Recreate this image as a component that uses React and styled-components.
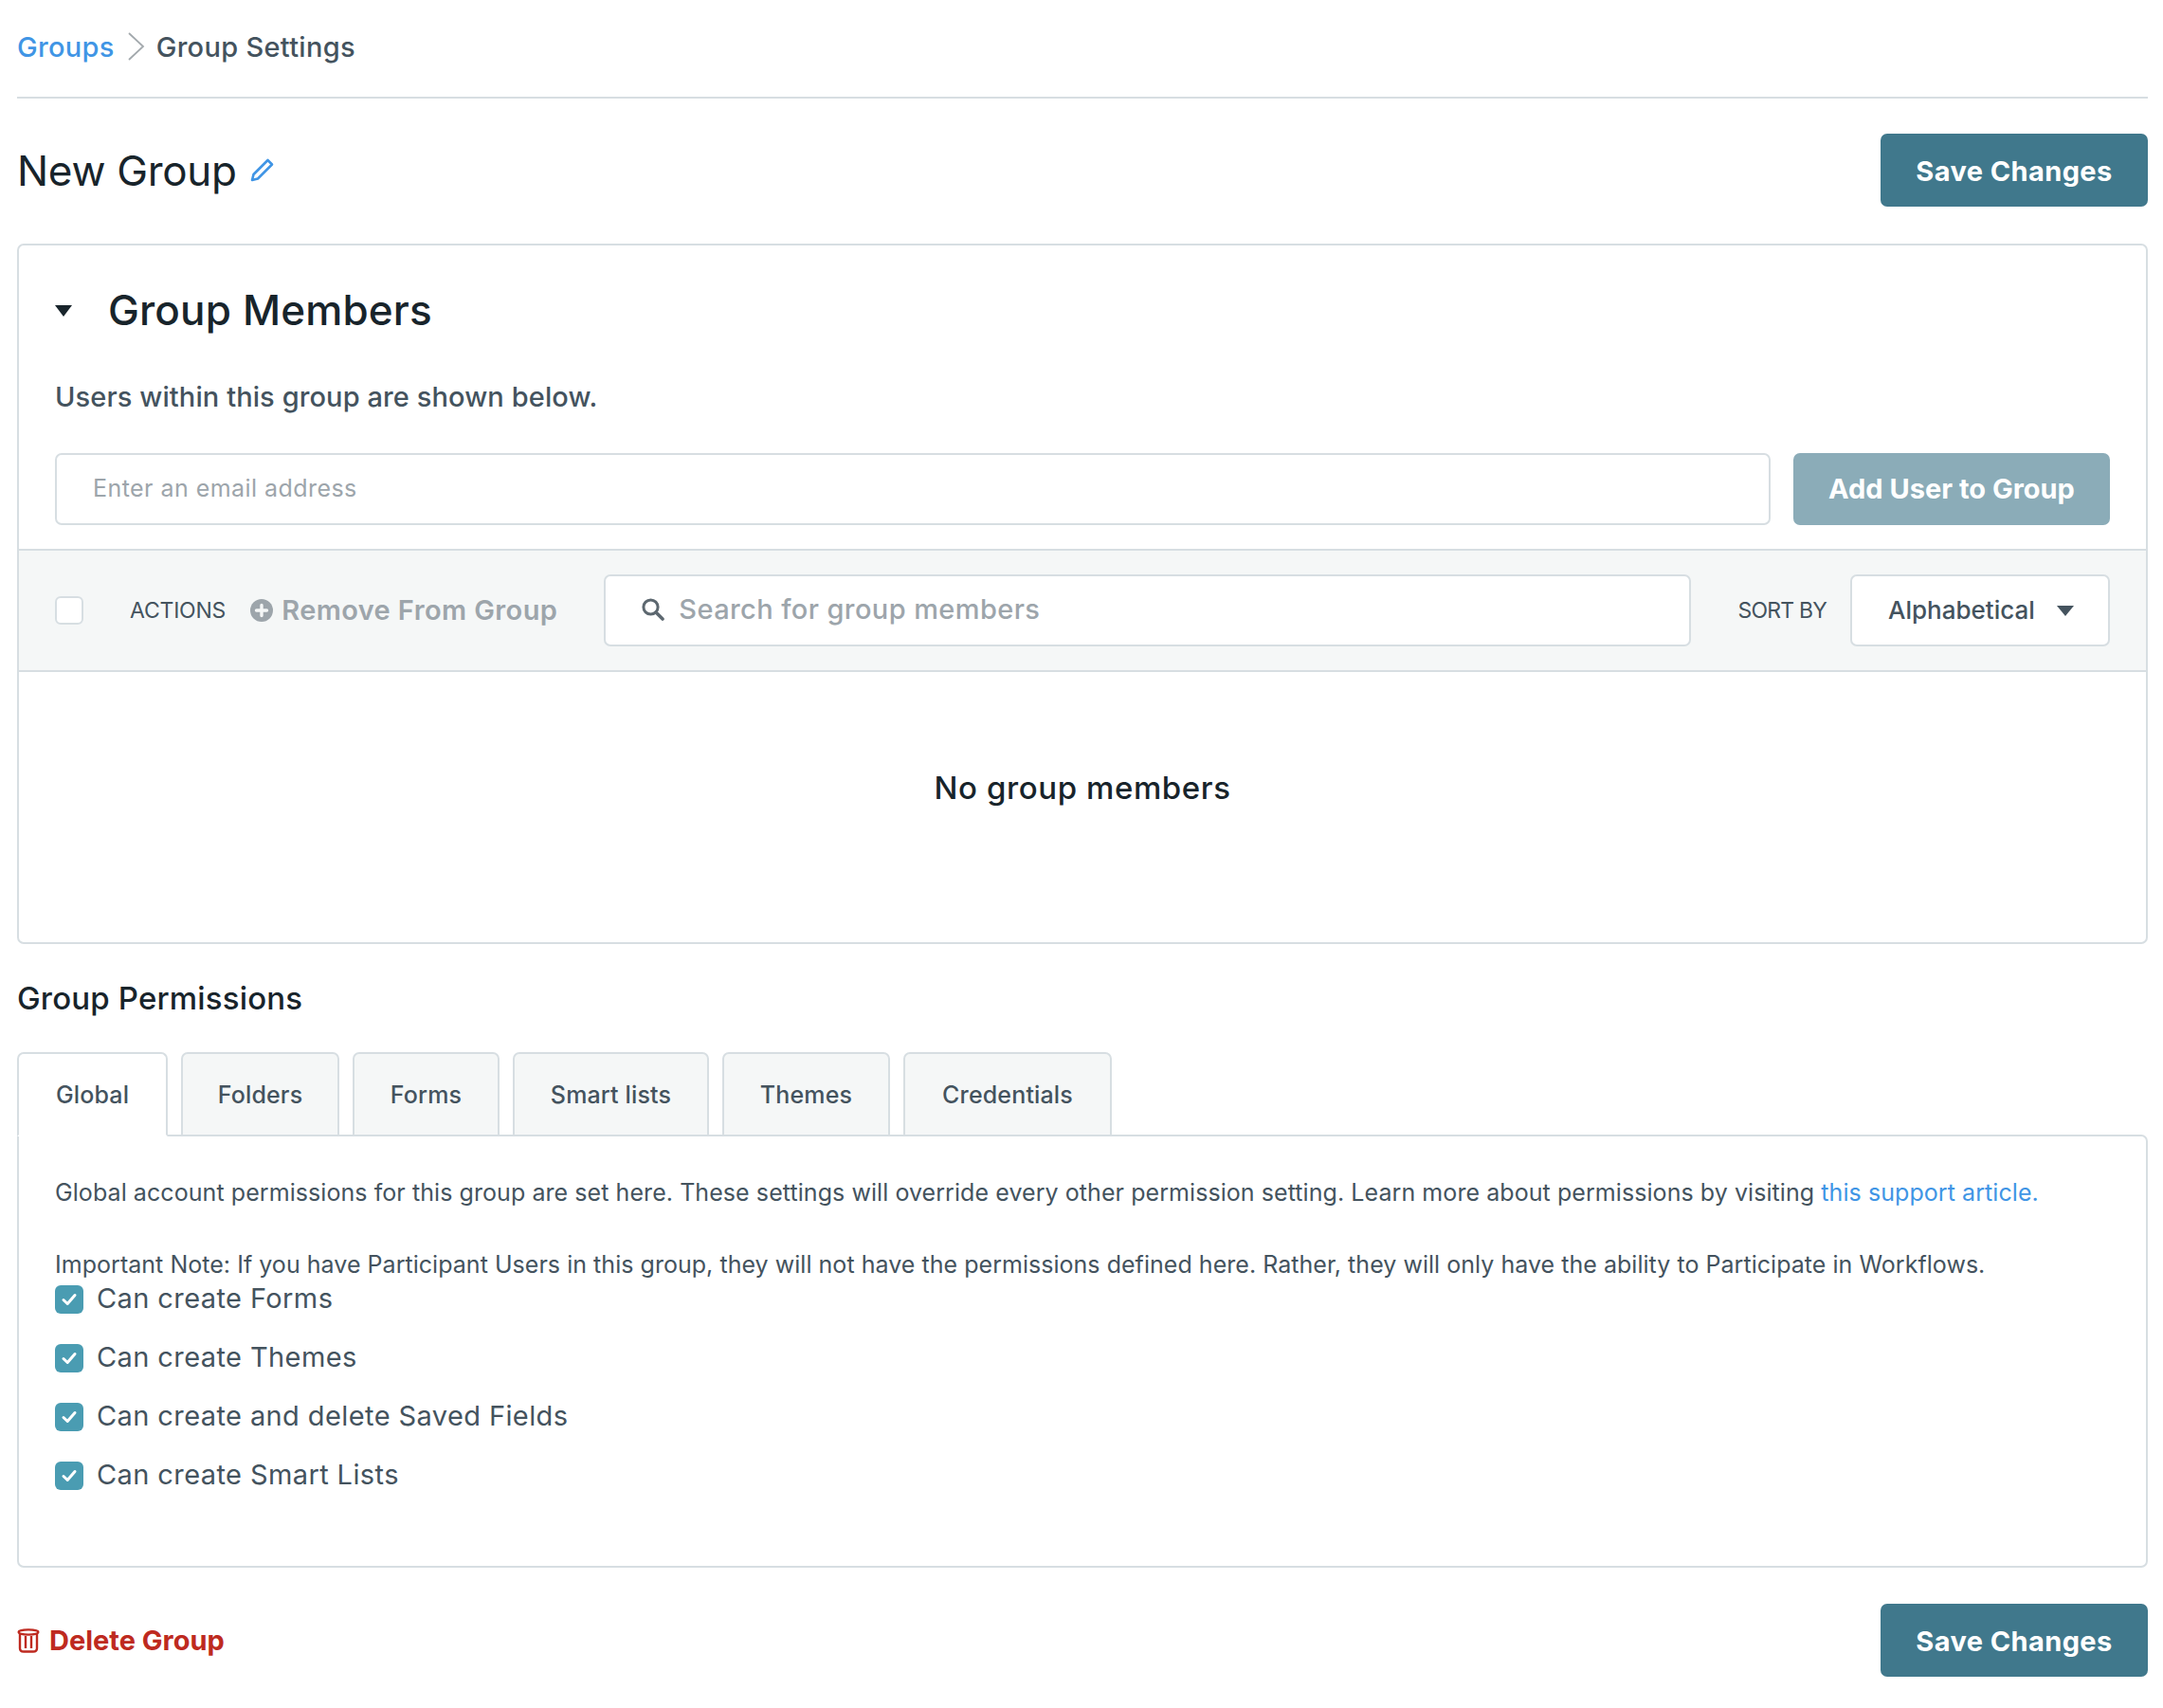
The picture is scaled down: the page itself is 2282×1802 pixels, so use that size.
import React from 'react';
import styled, { createGlobalStyle } from 'styled-components';

const GlobalStyle = createGlobalStyle`
  html, body {
    margin: 0;
    padding: 0;
    background: #fff;
    font-family: Inter, "Liberation Sans", sans-serif;
    color: #44535e;
  }
  * { box-sizing: border-box; }
`;

const Page = styled.div`
  width: 2282px;
  height: 1802px;
  padding: 0 16px 0 18px;
`;

const Breadcrumbs = styled.nav`
  height: 104px;
  padding-bottom: 4px;
  display: flex;
  align-items: center;
  border-bottom: 2px solid #d7dee2;
  font-size: 29px;
  font-weight: 500;
  letter-spacing: 0.3px;
`;

const Crumb = styled.a`
  color: #4095e5;
`;

const CrumbCurrent = styled.span`
  color: #44535e;
`;

const CrumbArrow = styled.svg`
  width: 20px;
  height: 32px;
  margin: 0 11px 0 13px;
`;

const TitleRow = styled.div`
  height: 153px;
  display: flex;
  align-items: center;
  justify-content: space-between;
  padding-bottom: 2px;
`;

const TitleWrap = styled.div`
  display: flex;
  align-items: center;
  gap: 14px;
`;

const Title = styled.h1`
  margin: 0;
  font-size: 44px;
  font-weight: 400;
  color: #18242b;
  letter-spacing: -0.3px;
`;

const SaveButton = styled.button`
  width: 282px;
  height: 77px;
  padding: 2px 0 0;
  border: none;
  border-radius: 7px;
  background: #40788c;
  color: #fff;
  font-family: inherit;
  font-size: 29px;
  font-weight: 700;
  letter-spacing: 0.4px;
`;

const Card = styled.section`
  height: 739px;
  border: 2px solid #d7dee2;
  border-radius: 7px;
  display: flex;
  flex-direction: column;
`;

const CardHead = styled.div`
  padding: 0 38px;
  height: 320px;
`;

const Heading = styled.div`
  height: 98px;
  display: flex;
  align-items: center;
  gap: 38px;
  margin-top: 19px;
`;

const HeadingText = styled.h2`
  margin: 0;
  font-size: 44px;
  font-weight: 500;
  color: #18242b;
  letter-spacing: 0.15px;
`;

const Caret = styled.span`
  display: block;
  width: 0;
  height: 0;
  flex: none;
  margin-top: ${p => p.$offset || 0}px;
  border-left: 9px solid transparent;
  border-right: 9px solid transparent;
  border-top: ${p => p.$height}px solid ${p => p.$color};
`;

const Lead = styled.p`
  margin: 21px 0 0;
  font-size: 29px;
  font-weight: 500;
  line-height: 44px;
  letter-spacing: 0.1px;
  color: #44535e;
`;

const AddRow = styled.div`
  display: flex;
  gap: 24px;
  margin-top: 37px;
`;

const Field = styled.div`
  height: 76px;
  background: #fff;
  border: 2px solid #d7dee2;
  border-radius: 7px;
  display: flex;
  align-items: center;
  padding: 0 38px;
`;

const EmailField = styled(Field)`
  flex: 1;
  padding-bottom: 2px;
  font-size: 25px;
  letter-spacing: 0.45px;
  color: #9da5ab;
`;

const SearchField = styled(Field)`
  flex: 1;
  gap: 15px;
  padding-bottom: 3px;
  font-size: 29px;
  font-weight: 500;
  letter-spacing: 0.4px;
  color: #9da5ab;
`;

const SelectField = styled(Field)`
  width: 274px;
  padding-right: 36px;
`;

const AddButton = styled.button`
  width: 334px;
  height: 76px;
  padding: 0 0 2px;
  border: none;
  border-radius: 7px;
  background: #8bacb8;
  color: #fff;
  font-family: inherit;
  font-size: 29px;
  font-weight: 700;
`;

const Toolbar = styled.div`
  height: 130px;
  background: #f5f7f7;
  border-top: 2px solid #d7dee2;
  border-bottom: 2px solid #d7dee2;
  display: flex;
  align-items: center;
  padding: 0 38px;
`;

const Check = styled.span`
  width: 30px;
  height: 30px;
  flex: none;
  border-radius: 6px;
  display: flex;
  align-items: center;
  justify-content: center;
  background: ${p => (p.$on ? '#4a9cb2' : '#fff')};
  border: ${p => (p.$on ? 'none' : '2px solid #d7dee2')};
`;

const ActionsLabel = styled.span`
  margin-left: 49px;
  font-size: 23px;
  letter-spacing: -0.2px;
  color: #44535e;
`;

const RemoveAction = styled.span`
  display: flex;
  align-items: center;
  gap: 9px;
  margin-left: 26px;
  margin-right: 49px;
  padding-bottom: 1px;
  font-size: 29px;
  font-weight: 600;
  letter-spacing: 0.4px;
  color: #9da5ab;
`;

const SortLabel = styled.span`
  margin: 0 25px 0 49px;
  font-size: 23px;
  letter-spacing: -0.8px;
  color: #44535e;
`;

const SelectText = styled.span`
  flex: 1;
  padding-bottom: 2px;
  color: #44535e;
  font-size: 26px;
  font-weight: 500;
`;

const Empty = styled.div`
  flex: 1;
  display: flex;
  align-items: center;
  justify-content: center;
  padding-bottom: 41px;
  font-size: 33px;
  font-weight: 500;
  letter-spacing: 0.6px;
  color: #18242b;
`;

const SubHeading = styled.h3`
  margin: 0;
  height: 114px;
  display: flex;
  align-items: center;
  padding-bottom: 1px;
  font-size: 33px;
  font-weight: 500;
  letter-spacing: 0.17px;
  color: #18242b;
`;

const Tabs = styled.div`
  display: flex;
  gap: 14px;
  margin-bottom: -2px;
  position: relative;
`;

const Tab = styled.div`
  width: ${p => p.$width}px;
  height: 89px;
  display: flex;
  align-items: center;
  justify-content: center;
  border: 2px solid #d7dee2;
  border-radius: 7px 7px 0 0;
  background: ${p => (p.$active ? '#fff' : '#f5f7f7')};
  border-bottom-color: ${p => (p.$active ? '#fff' : '#d7dee2')};
  font-size: 25px;
  font-weight: 500;
  letter-spacing: 0.15px;
  color: #44535e;
`;

const Panel = styled.div`
  height: 457px;
  border: 2px solid #d7dee2;
  border-radius: 0 7px 7px 7px;
  padding: 40px 38px 0;
`;

const Note = styled.p`
  margin: 0 0 38px;
  font-size: 25px;
  line-height: 38px;
  letter-spacing: 0.07px;
  color: #44535e;
`;

const NoteLast = styled(Note)`
  margin-bottom: 0;
  letter-spacing: 0.035px;
`;

const SupportLink = styled.a`
  color: #4095e5;
`;

const PermList = styled.div`
  display: flex;
  flex-direction: column;
  gap: 26px;
`;

const Perm = styled.label`
  height: 36px;
  display: flex;
  align-items: center;
  gap: 14px;
  font-size: 29px;
  letter-spacing: 0.4px;
  color: #44535e;
`;

const PermText = styled.span`
  margin-bottom: 3px;
`;

const Footer = styled.div`
  height: 115px;
  display: flex;
  align-items: center;
  justify-content: space-between;
  padding-top: 38px;
`;

const DeleteLink = styled.a`
  display: flex;
  align-items: center;
  gap: 10px;
  font-size: 29px;
  font-weight: 700;
  color: #be2a20;
`;

const permissions = [
  'Can create Forms',
  'Can create Themes',
  'Can create and delete Saved Fields',
  'Can create Smart Lists',
];

const tabs = [
  { label: 'Global', width: 159, active: true },
  { label: 'Folders', width: 167 },
  { label: 'Forms', width: 155 },
  { label: 'Smart lists', width: 207 },
  { label: 'Themes', width: 177 },
  { label: 'Credentials', width: 220 },
];

const App = () => {
  return (
    <Page>
      <GlobalStyle />
      <Breadcrumbs>
        <Crumb>Groups</Crumb>
        <CrumbArrow viewBox="0 0 20 32">
          <path d="M2 2 L17 16 L2 30" fill="none" stroke="#a3a9ad" strokeWidth="1.8" />
        </CrumbArrow>
        <CrumbCurrent>Group Settings</CrumbCurrent>
      </Breadcrumbs>

      <TitleRow>
        <TitleWrap>
          <Title>New Group</Title>
          <svg width="25" height="25" viewBox="0 0 25 25">
            <path d="M18.5 2 L23 6.5 L8 21.5 L2 23 L3.5 17 Z" fill="none" stroke="#4095e5" strokeWidth="2.6" strokeLinejoin="round" />
          </svg>
        </TitleWrap>
        <SaveButton>Save Changes</SaveButton>
      </TitleRow>

      <Card>
        <CardHead>
          <Heading>
            <Caret $height={12} $color="#18242b" $offset={2} />
            <HeadingText>Group Members</HeadingText>
          </Heading>
          <Lead>Users within this group are shown below.</Lead>
          <AddRow>
            <EmailField>Enter an email address</EmailField>
            <AddButton>Add User to Group</AddButton>
          </AddRow>
        </CardHead>
        <Toolbar>
          <Check />
          <ActionsLabel>ACTIONS</ActionsLabel>
          <RemoveAction>
            <svg width="24" height="24" viewBox="0 0 24 24">
              <circle cx="12" cy="12" r="12" fill="#9da5ab" />
              <path d="M12 6.5v11M6.5 12h11" stroke="#f5f7f7" strokeWidth="3.4" strokeLinecap="round" />
            </svg>
            Remove From Group
          </RemoveAction>
          <SearchField>
            <svg width="24" height="24" viewBox="0 0 24 24">
              <circle cx="9.5" cy="9.5" r="7.6" fill="none" stroke="#5d6870" strokeWidth="3" />
              <path d="M15 15 L22 22" stroke="#5d6870" strokeWidth="3.6" strokeLinecap="round" />
            </svg>
            Search for group members
          </SearchField>
          <SortLabel>SORT BY</SortLabel>
          <SelectField>
            <SelectText>Alphabetical</SelectText>
            <Caret $height={11} $color="#44535e" />
          </SelectField>
        </Toolbar>
        <Empty>No group members</Empty>
      </Card>

      <SubHeading>Group Permissions</SubHeading>
      <Tabs>
        {tabs.map(t => (
          <Tab key={t.label} $width={t.width} $active={t.active}>{t.label}</Tab>
        ))}
      </Tabs>
      <Panel>
        <Note>
          Global account permissions for this group are set here. These settings will override every other permission setting. Learn more about permissions by visiting <SupportLink>this support article.</SupportLink>
        </Note>
        <NoteLast>
          Important Note: If you have Participant Users in this group, they will not have the permissions defined here. Rather, they will only have the ability to Participate in Workflows.
        </NoteLast>
        <PermList>
          {permissions.map(p => (
            <Perm key={p}>
              <Check $on>
                <svg width="20" height="20" viewBox="0 0 20 20">
                  <path d="M4 10.5 L8.2 14.5 L16 5.5" fill="none" stroke="#fff" strokeWidth="3" strokeLinecap="round" strokeLinejoin="round" />
                </svg>
              </Check>
              <PermText>{p}</PermText>
            </Perm>
          ))}
        </PermList>
      </Panel>

      <Footer>
        <DeleteLink>
          <svg width="24" height="26" viewBox="0 0 24 26">
            <ellipse cx="12" cy="4" rx="10.5" ry="2.6" fill="none" stroke="#be2a20" strokeWidth="2.2" />
            <path d="M3 5 V21 Q3 24.5 7 24.5 H17 Q21 24.5 21 21 V5 M9 8 V21 M15 8 V21" fill="none" stroke="#be2a20" strokeWidth="2.4" />
          </svg>
          Delete Group
        </DeleteLink>
        <SaveButton>Save Changes</SaveButton>
      </Footer>
    </Page>
  );
};

export default App;
